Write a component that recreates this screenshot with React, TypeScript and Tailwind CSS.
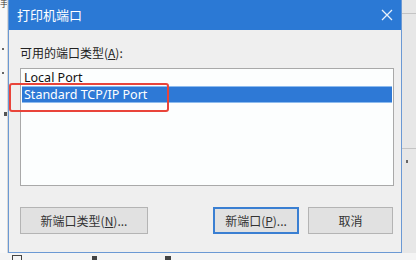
import React from "react";

const cjk = '"Noto Sans CJK SC", "Noto Sans", sans-serif';

function Btn({ children, focus }: { children: React.ReactNode; focus?: boolean }) {
  return (
    <button
      className={
        "w-full h-[27px] flex items-center justify-center text-[12px] text-[#333] bg-[#e1e1e1] border " +
        (focus ? "border-[#3a7fd2] shadow-[inset_0_0_0_1px_#3a7fd2]" : "border-[#b4b4b4]")
      }
      style={{ fontFamily: cjk }}
    >
      {children}
    </button>
  );
}

export default function App() {
  return (
    <div className="w-[416px] h-[260px] overflow-hidden bg-[#f6f6f6] flex flex-col" style={{ fontFamily: cjk }}>
      <div className="flex h-[253px]">
        {/* left strip behind dialog */}
        <div className="w-[8px] relative bg-[#f8f8f8] border-r border-[#d8d8d8] overflow-hidden">
          <span className="absolute left-0 top-0 text-[8px] text-[#333] leading-none">手</span>
          <span className="absolute left-[2px] top-[48px] w-[2px] h-[2px] bg-[#666]" />
          <span className="absolute left-[2px] top-[72px] w-[2px] h-[2px] bg-[#666]" />
          <span className="absolute left-[4px] top-[112px] w-[3px] h-[4px] bg-[#555]" />
        </div>

        {/* dialog */}
        <div className="w-[394px] flex flex-col border-x border-b border-[#6b99d4] relative">
          <div className="h-[30px] bg-[#2b79d5] flex items-center justify-between pl-[8px] pr-[5px]">
            <span className="text-white text-[13px]">打印机端口</span>
            <svg width="12" height="12" viewBox="0 0 12 12" className="mr-[3px]">
              <path d="M1 1L11 11M11 1L1 11" stroke="#e8f1fb" strokeWidth="1.3" />
            </svg>
          </div>
          <div className="flex-1 bg-[#efefef] flex flex-col pl-[11px] pr-[7px]">
            <div className="mt-[14px] h-[18px] text-[12px] text-[#222] leading-[18px]">
              可用的端口类型(<span className="underline">A</span>):
            </div>
            <div
              className="mt-[6px] h-[118px] bg-[#fcfefe] border border-[#a9a9a9] pt-[1px] px-[1px] text-[12.5px] leading-[16px]"
              style={{ fontFamily: '"Noto Sans", "DejaVu Sans", sans-serif' }}
            >
              <div className="h-[16px] pl-[2px] text-[#111]">Local Port</div>
              <div className="h-[17px] pl-[2px] bg-[#2e79d6] text-white border-y border-[#8dbbee]">Standard TCP/IP Port</div>
            </div>
            <div className="mt-[21px] flex pr-[1px]">
              <div className="w-[128px]">
                <Btn>
                  新端口类型(<span className="underline">N</span>)...
                </Btn>
              </div>
              <div className="ml-auto flex gap-[9px]">
                <div className="w-[86px]">
                  <Btn focus>
                    新端口(<span className="underline">P</span>)...
                  </Btn>
                </div>
                <div className="w-[85px]">
                  <Btn>取消</Btn>
                </div>
              </div>
            </div>
          </div>
          {/* red highlight annotation */}
          <div className="absolute left-[0px] top-[83px] w-[160px] h-[29px] border-[2.5px] border-[#e9443a] rounded-[3px]" />
        </div>

        {/* right strip behind dialog */}
        <div className="flex-1 bg-[#e7e7e7] relative">
          <div className="absolute left-0 right-0 top-[13px] h-px bg-[#c4c4c4]" />
          <div className="absolute left-0 right-0 top-[148px] h-px bg-[#c4c4c4]" />
          <div className="absolute left-[4px] top-[160px] w-[2px] h-[3px] bg-[#666]" />
        </div>
      </div>
      {/* bottom strip behind dialog */}
      <div className="flex-1 bg-[#f4f4f4] relative">
        <div className="absolute left-[12px] top-[2px] w-[10px] h-[10px] border border-[#444]" />
        <div className="absolute left-[92px] top-[3px] w-[5px] h-[4px] bg-[#444]" />
        <div className="absolute left-[165px] top-[3px] w-[6px] h-[4px] bg-[#444]" />
      </div>
    </div>
  );
}
